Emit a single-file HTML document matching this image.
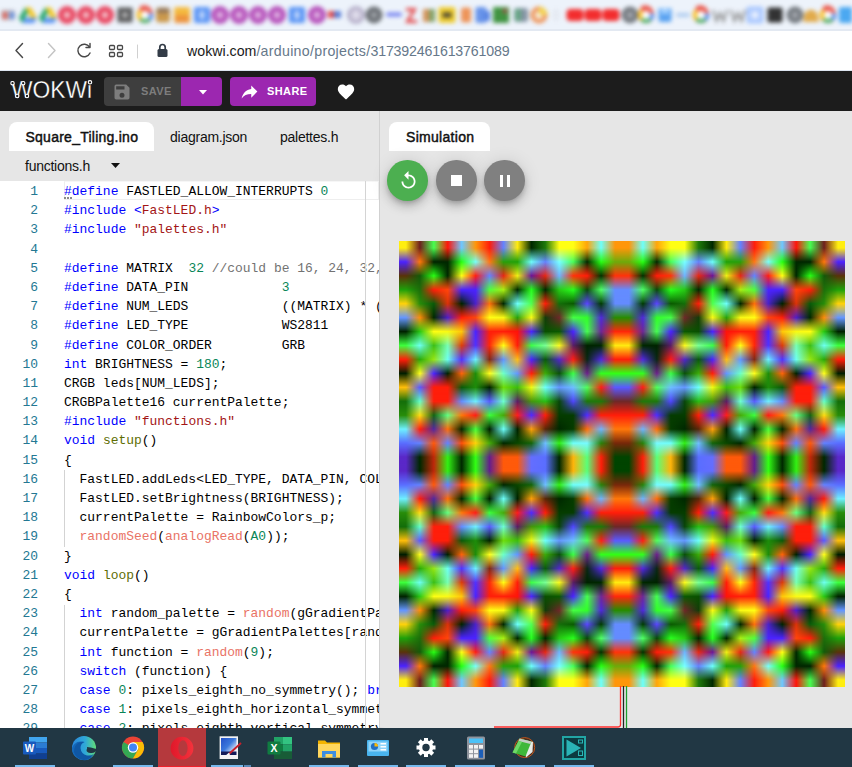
<!DOCTYPE html>
<html><head><meta charset="utf-8"><title>Wokwi</title>
<style>
*{box-sizing:border-box;margin:0;padding:0}
html,body{width:852px;height:767px;overflow:hidden;background:#e6e6e6;font-family:"Liberation Sans",sans-serif}
#root{position:relative;width:852px;height:767px;overflow:hidden}
#tabs{position:absolute;left:0;top:0;width:852px;height:31px;background:#edf3fb;border-bottom:2px solid #e3e9f2;overflow:hidden}
#tabs .ic{position:absolute;left:0;top:-1.500px;width:852px;height:31px;filter:blur(2.200px);opacity:.9}
#tabs i{position:absolute;top:8px;width:15px;height:15px;border-radius:5px;display:block}
#addr{position:absolute;left:0;top:31px;width:852px;height:40px;background:#fff;border-bottom:1px solid #dde5f0}
#url{position:absolute;left:187px;top:11.500px;font-size:14.200px;color:#66788a;letter-spacing:0px;white-space:nowrap}
#url b{font-weight:normal;color:#1a1a1a}
#bar{position:absolute;left:0;top:71px;width:852px;height:40px;background:#1c1c1c}
#save{position:absolute;left:104px;top:6px;width:78px;height:29px;background:#3e3e3e;border-radius:4px 0 0 4px}
#save span{position:absolute;left:37px;top:8px;font-size:11px;font-weight:bold;color:#7d7d7d;letter-spacing:.4px}
#dd{position:absolute;left:181px;top:6px;width:41px;height:29px;background:#9c27b0;border-radius:0 4px 4px 0}
#share{position:absolute;left:230px;top:6px;width:86px;height:29px;background:#9c27b0;border-radius:4px}
#share span{position:absolute;left:37px;top:8px;font-size:11px;font-weight:bold;color:#fff;letter-spacing:.4px}
#left{position:absolute;left:0;top:111px;width:379px;height:617px;background:#e6e6e6;overflow:hidden}
#tab1{position:absolute;left:9px;top:11px;width:145px;height:29px;background:#fff;border-radius:8px 8px 0 0}
.tabt{position:absolute;top:18px;font-size:14px;color:#111;white-space:nowrap;letter-spacing:-.25px}
#ed{position:absolute;left:0;top:70px;width:379px;height:547px;background:#fff;overflow:hidden;font-family:"Liberation Mono",monospace;font-size:12.96px;color:#000}
.ln{position:relative;height:19.190px;line-height:19.190px;white-space:pre}
.no{position:absolute;left:0;width:38px;text-align:right;color:#237893}
.tx{position:absolute;left:64px}
.k{color:#0000ff}.n{color:#098658}.s{color:#a31515}.c{color:#727272}.f{color:#5e6d03}.a{color:#e97366}
#sep{position:absolute;left:379px;top:111px;width:6px;height:617px;background:linear-gradient(to right,#c9c9c9 0,#dcdcdc 20%,#e6e6e6 100%)}
#right{position:absolute;left:380px;top:111px;width:472px;height:616px;background:#e6e6e6}
#simtab{position:absolute;left:389px;top:122px;width:101px;height:29px;background:#fff;border-radius:8px 8px 0 0}
.rb{position:absolute;top:160px;width:40.500px;height:40.500px;border-radius:50%;box-shadow:0 3px 5px -1px rgba(0,0,0,.2),0 6px 10px rgba(0,0,0,.14),0 1px 18px rgba(0,0,0,.12)}
#task{position:absolute;left:0;top:728px;width:852px;height:39px;background:#213744;overflow:hidden}
.tb{position:absolute;top:37px;width:40px;height:2px;background:#76b9ed;display:block}
</style></head><body><div id="root">
<div id="tabs"><div class="ic"><svg width="852" height="31" viewBox="0 0 852 31"><rect x="1" y="11" width="14" height="10" rx="2" fill="#b8b0b8"/><rect x="3" y="13" width="4" height="7" fill="#e04a3a"/><rect x="10" y="13" width="4" height="7" fill="#4a80e0"/><path d="M25 8.500 L31 8.500 L37 19 L31 19Z" fill="#f4c20d"/><path d="M25 8.500 L19 19 L22 24 L28 13.500Z" fill="#0f9d58"/><path d="M25 19 L37 19 L34 24 L22 24Z" fill="#4285f4"/><path d="M45 8.500 L51 8.500 L57 19 L51 19Z" fill="#f4c20d"/><path d="M45 8.500 L39 19 L42 24 L48 13.500Z" fill="#0f9d58"/><path d="M45 19 L57 19 L54 24 L42 24Z" fill="#4285f4"/><circle cx="67" cy="16" r="9" fill="#e8334f"/><circle cx="67" cy="16" r="3.2" fill="#f6c0c8"/><circle cx="86" cy="16" r="9" fill="#e8334f"/><circle cx="86" cy="16" r="3.2" fill="#f6c0c8"/><circle cx="105" cy="16" r="9" fill="#e8334f"/><circle cx="105" cy="16" r="3.2" fill="#f6c0c8"/><rect x="117.5" y="8.5" width="15" height="15" rx="1" fill="#4a4a4a"/><rect x="122.5" y="13.5" width="5" height="5" fill="#bdbdbd"/><path d="M145 16 L139.4 8 A8 8 0 0 1 152 12 Z" fill="#ea4335"/><circle cx="145" cy="16" r="8" fill="#ea4335"/><path d="M145 16 L139.3 21.700 A8 8 0 0 1 139.3 10.300 Z" fill="#fbbc05"/><path d="M145 16 L139.3 21.700 A8 8 0 0 0 150.7 21.700 Z" fill="#34a853"/><path d="M145 16 L150.7 21.700 A8 8 0 0 0 153 14.500 L145 14.500 Z" fill="#4285f4"/><circle cx="145" cy="16" r="4.300" fill="#fff"/><rect x="156" y="8.5" width="14" height="15" rx="3" fill="#c8903a"/><rect x="157" y="9" width="12" height="5" fill="#8a6a4a"/><rect x="174" y="8" width="16" height="16" rx="2" fill="#f5b42a"/><rect x="175" y="16" width="14" height="8" fill="#ee8a2a"/><rect x="194" y="8" width="16" height="16" rx="2" fill="#4a8af4"/><rect x="199.5" y="12" width="5" height="8" fill="#bcd4fb"/><circle cx="220" cy="16" r="9" fill="#b040b4"/><circle cx="220" cy="16" r="3.5" fill="#dca8de"/><circle cx="239" cy="16" r="9" fill="#b040b4"/><circle cx="239" cy="16" r="3.5" fill="#dca8de"/><circle cx="258" cy="16" r="9" fill="#b040b4"/><circle cx="258" cy="16" r="3.5" fill="#dca8de"/><circle cx="277" cy="16" r="9" fill="#b040b4"/><circle cx="277" cy="16" r="3.5" fill="#dca8de"/><circle cx="317" cy="16" r="9" fill="#b040b4"/><circle cx="317" cy="16" r="3.5" fill="#dca8de"/><rect x="289" y="8" width="16" height="16" rx="2" fill="#4a8af4"/><rect x="294.5" y="12" width="5" height="8" fill="#bcd4fb"/><rect x="328" y="12" width="6" height="7" fill="#e03a3a"/><rect x="334" y="12" width="7" height="7" fill="#4a70d0"/><circle cx="356" cy="16" r="9" fill="#b0a8c4"/><circle cx="356" cy="16" r="5" fill="#dcd8e8"/><circle cx="374" cy="16" r="8.5" fill="#5f6368"/><circle cx="374" cy="16" r="3" fill="#9a9ea4"/><rect x="386" y="13.500" width="16" height="4" rx="2" fill="#6a78f0"/><path d="M406 9 H417 L410 21 H417 V24 H405 L412 12 H406Z" fill="#e23a3a"/><rect x="423" y="10" width="6" height="13" fill="#d08a4a"/><rect x="429" y="10" width="6" height="13" fill="#7a9a58"/><rect x="438.5" y="8" width="17" height="16" rx="2" fill="#f0c818"/><rect x="442.5" y="13.5" width="9" height="5" fill="#3a3420"/><rect x="461" y="8.5" width="10" height="15" rx="2" fill="#ee8a48"/><rect x="475.5" y="8" width="11" height="16" rx="2" fill="#5a8ae8"/><rect x="484" y="12" width="6" height="10" fill="#4a7ae0"/><rect x="493" y="8" width="16" height="16" rx="1" fill="#2f8a2f"/><rect x="503" y="10" width="4" height="4" fill="#a83a3a"/><rect x="514" y="9" width="14" height="14" rx="3" fill="#7a8a9a"/><rect x="515" y="10" width="6" height="12" fill="#58a078"/><circle cx="539" cy="16" r="8.5" fill="#ee8a48"/><circle cx="539" cy="16" r="4" fill="#f8f0e0"/><path d="M539 16 L547.500 16 A8.500 8.500 0 0 0 539 7.500Z" fill="#f4d040"/><rect x="553" y="10" width="6" height="12" rx="2" fill="#e4e8f0"/><rect x="566.5" y="10" width="17" height="12" rx="4" fill="#f41818"/><rect x="584.5" y="10" width="17" height="12" rx="4" fill="#f41818"/><rect x="602.5" y="10" width="17" height="12" rx="4" fill="#f41818"/><circle cx="630" cy="16" r="8.5" fill="#6a6f75"/><circle cx="630" cy="16" r="3" fill="#a0a4aa"/><path d="M646 16 L640.4 8 A8 8 0 0 1 653 12 Z" fill="#ea4335"/><circle cx="646" cy="16" r="8" fill="#ea4335"/><path d="M646 16 L640.3 21.700 A8 8 0 0 1 640.3 10.300 Z" fill="#fbbc05"/><path d="M646 16 L640.3 21.700 A8 8 0 0 0 651.7 21.700 Z" fill="#34a853"/><path d="M646 16 L651.7 21.700 A8 8 0 0 0 654 14.500 L646 14.500 Z" fill="#4285f4"/><circle cx="646" cy="16" r="4.300" fill="#fff"/><rect x="658.5" y="9" width="13" height="14" rx="2" fill="#4a9af0"/><rect x="661" y="9" width="8" height="6" fill="#9accff"/><rect x="676" y="14" width="14" height="4" rx="2" fill="#a8c8ee"/><path d="M701 16 L695.4 8 A8 8 0 0 1 708 12 Z" fill="#ea4335"/><circle cx="701" cy="16" r="8" fill="#ea4335"/><path d="M701 16 L695.3 21.700 A8 8 0 0 1 695.3 10.300 Z" fill="#fbbc05"/><path d="M701 16 L695.3 21.700 A8 8 0 0 0 706.7 21.700 Z" fill="#34a853"/><path d="M701 16 L706.7 21.700 A8 8 0 0 0 709 14.500 L701 14.500 Z" fill="#4285f4"/><circle cx="701" cy="16" r="4.300" fill="#fff"/><path d="M713 11 L716.5 22 L720 14 L723.5 22 L727 11" stroke="#8a8a8a" stroke-width="2.200" fill="none"/><path d="M731 11 L734.5 22 L738 14 L741.5 22 L745 11" stroke="#8a8a8a" stroke-width="2.200" fill="none"/><rect x="746.5" y="7.5" width="17" height="17" rx="2" fill="#a4c4ff"/><rect x="751.5" y="12.5" width="7" height="7" fill="#e8f0ff"/><rect x="767.5" y="8.5" width="15" height="15" rx="2" fill="#1e1e1e"/><circle cx="795" cy="16" r="8.5" fill="#6a6f75"/><circle cx="795" cy="16" r="3" fill="#a0a4aa"/><path d="M803 23 L804.500 14 Q811 7 817.500 14 L819 23Z" fill="#e0a43a"/><path d="M828 16 L822.4 8 A8 8 0 0 1 835 12 Z" fill="#ea4335"/><circle cx="828" cy="16" r="8" fill="#ea4335"/><path d="M828 16 L822.3 21.700 A8 8 0 0 1 822.3 10.300 Z" fill="#fbbc05"/><path d="M828 16 L822.3 21.700 A8 8 0 0 0 833.7 21.700 Z" fill="#34a853"/><path d="M828 16 L833.7 21.700 A8 8 0 0 0 836 14.500 L828 14.500 Z" fill="#4285f4"/><circle cx="828" cy="16" r="4.300" fill="#fff"/><rect x="839" y="8" width="16" height="16" rx="2" fill="#3aa0f0"/></svg></div></div>
<div id="addr">
<svg style="position:absolute;left:0;top:0" width="180" height="39" viewBox="0 0 180 39" fill="none" stroke="#484848" stroke-width="1.450" stroke-linecap="round" stroke-linejoin="round">
<path d="M22.5 12.5 L16 19.5 L22.5 26.5"/>
<path d="M48.500 12.5 L55 19.5 L48.500 26.5" stroke="#c4c4c4"/>
<path d="M89.500 16 A6.300 6.300 0 1 0 90 22"/><path d="M90 12.500 V16.500 H86" />
<rect x="109.500" y="14.500" width="5" height="4" rx="1" stroke-width="1.300"/><rect x="117.500" y="14.500" width="5" height="4" rx="1" stroke-width="1.300"/><rect x="109.500" y="21.500" width="5" height="4" rx="1" stroke-width="1.300"/><rect x="117.500" y="21.500" width="5" height="4" rx="1" stroke-width="1.300"/>
<path d="M137.500 14 V27" stroke="#d0d0d0" stroke-width="1"/>
<rect x="157.500" y="18" width="10" height="8" rx="1.500" fill="#333c47" stroke="none"/><path d="M159.800 18 V16.200 A2.700 2.700 0 0 1 165.200 16.200 V18" stroke="#333c47" stroke-width="1.700"/>
</svg>
<div id="url"><b>wokwi.com</b><span style="letter-spacing:.29px">/arduino/projects/</span><span style="letter-spacing:-.17px">317392461613761089</span></div>
</div>
<div id="bar">
<svg style="position:absolute;left:0;top:0" width="104" height="40" viewBox="0 0 104 40"><text x="11" y="27" font-family="Liberation Sans,sans-serif" font-size="23.500" fill="#fff" stroke="#1c1c1c" stroke-width=".3" textLength="81" lengthAdjust="spacingAndGlyphs">WOKWi</text><g fill="#1c1c1c" stroke="#fff" stroke-width="1.100"><circle cx="12.500" cy="12.200" r="1.700"/><circle cx="23.200" cy="12.200" r="1.700"/><circle cx="17.200" cy="25" r="1.700"/><circle cx="27" cy="25" r="1.700"/><circle cx="90" cy="11.300" r="1.700"/></g></svg>
<div id="save"><svg style="position:absolute;left:8px;top:4.500px" width="20" height="20" viewBox="0 0 24 24"><path fill="#7d7d7d" d="M17 3H5a2 2 0 0 0-2 2v14a2 2 0 0 0 2 2h14a2 2 0 0 0 2-2V7l-4-4zm-5 16a3 3 0 1 1 0-6 3 3 0 0 1 0 6zm3-10H5V5h10v4z"/></svg><span>SAVE</span></div>
<div id="dd"><svg style="position:absolute;left:17.500px;top:12.500px" width="8" height="5" viewBox="0 0 8 5"><path d="M0 0H8L4 4.600Z" fill="#fff"/></svg></div>
<div id="share"><svg style="position:absolute;left:9px;top:4px" width="21" height="21" viewBox="0 0 24 24"><path fill="#fff" transform="translate(24 0) scale(-1 1)" d="M10 9V5l-7 7 7 7v-4.100c5 0 8.500 1.600 11 5.100-1-5-4-10-11-11z"/></svg><span>SHARE</span></div>
<svg style="position:absolute;left:336px;top:11px" width="20" height="18" viewBox="0 0 24 22"><path fill="#fff" d="M12 21.350l-1.450-1.320C5.400 15.360 2 12.280 2 8.500 2 5.420 4.420 3 7.500 3c1.740 0 3.410.81 4.500 2.090C13.090 3.810 14.760 3 16.500 3 19.580 3 22 5.420 22 8.500c0 3.780-3.400 6.860-8.550 11.540L12 21.350z"/></svg>
</div>
<div id="left">
<div id="tab1"></div>
<div class="tabt" style="left:25.500px;-webkit-text-stroke:.45px #111;letter-spacing:.25px">Square_Tiling.ino</div>
<div class="tabt" style="left:170px">diagram.json</div>
<div class="tabt" style="left:280px">palettes.h</div>
<div class="tabt" style="left:25px;top:47px">functions.h</div>
<svg style="position:absolute;left:111px;top:52px" width="10" height="6" viewBox="0 0 10 6"><path d="M0 0H9L4.500 5Z" fill="#111"/></svg>
<div id="ed">
<div style="position:absolute;left:64px;top:0;width:315px;height:19px;border:1px solid #eee;border-top-color:#f6f6f6"></div>
<div style="position:absolute;left:64px;top:16px;width:8px;height:0;border-bottom:2px dotted #8a8a8a"></div><div style="position:absolute;left:64px;top:289.300px;width:1px;height:76.800px;background:#d3d3d3"></div><div style="position:absolute;left:64px;top:423.600px;width:1px;height:130px;background:#d3d3d3"></div>
<div style="position:absolute;left:0;top:1px;width:379px;">
<div class="ln"><span class="no">1</span><span class="tx"><span class="k">#define</span> FASTLED_ALLOW_INTERRUPTS <span class="n">0</span></span></div>
<div class="ln"><span class="no">2</span><span class="tx"><span class="k">#include </span><span class="k">&lt;</span><span class="s">FastLED.h</span><span class="k">&gt;</span></span></div>
<div class="ln"><span class="no">3</span><span class="tx"><span class="k">#include </span><span class="s">"palettes.h"</span></span></div>
<div class="ln"><span class="no">4</span><span class="tx"></span></div>
<div class="ln"><span class="no">5</span><span class="tx"><span class="k">#define</span> MATRIX  <span class="n">32</span><span class="c"> //could be 16, 24, 32, 40, 48, 56, 64</span></span></div>
<div class="ln"><span class="no">6</span><span class="tx"><span class="k">#define</span> DATA_PIN            <span class="n">3</span></span></div>
<div class="ln"><span class="no">7</span><span class="tx"><span class="k">#define</span> NUM_LEDS            ((MATRIX) * (MATRIX))</span></div>
<div class="ln"><span class="no">8</span><span class="tx"><span class="k">#define</span> LED_TYPE            WS2811</span></div>
<div class="ln"><span class="no">9</span><span class="tx"><span class="k">#define</span> COLOR_ORDER         GRB</span></div>
<div class="ln"><span class="no">10</span><span class="tx"><span class="k">int</span> BRIGHTNESS = <span class="n">180</span>;</span></div>
<div class="ln"><span class="no">11</span><span class="tx">CRGB leds[NUM_LEDS];</span></div>
<div class="ln"><span class="no">12</span><span class="tx">CRGBPalette16 currentPalette;</span></div>
<div class="ln"><span class="no">13</span><span class="tx"><span class="k">#include </span><span class="s">"functions.h"</span></span></div>
<div class="ln"><span class="no">14</span><span class="tx"><span class="k">void</span> <span class="f">setup</span>()</span></div>
<div class="ln"><span class="no">15</span><span class="tx">{</span></div>
<div class="ln"><span class="no">16</span><span class="tx">  FastLED.addLeds&lt;LED_TYPE, DATA_PIN, COLOR_ORDER&gt;(leds, NUM_LEDS);</span></div>
<div class="ln"><span class="no">17</span><span class="tx">  FastLED.setBrightness(BRIGHTNESS);</span></div>
<div class="ln"><span class="no">18</span><span class="tx">  currentPalette = RainbowColors_p;</span></div>
<div class="ln"><span class="no">19</span><span class="tx">  <span class="a">randomSeed</span>(<span class="a">analogRead</span>(<span class="n">A0</span>));</span></div>
<div class="ln"><span class="no">20</span><span class="tx">}</span></div>
<div class="ln"><span class="no">21</span><span class="tx"><span class="k">void</span> <span class="f">loop</span>()</span></div>
<div class="ln"><span class="no">22</span><span class="tx">{</span></div>
<div class="ln"><span class="no">23</span><span class="tx">  <span class="k">int</span> random_palette = <span class="a">random</span>(gGradientPaletteCount);</span></div>
<div class="ln"><span class="no">24</span><span class="tx">  currentPalette = gGradientPalettes[random_palette];</span></div>
<div class="ln"><span class="no">25</span><span class="tx">  <span class="k">int</span> function = <span class="a">random</span>(<span class="n">9</span>);</span></div>
<div class="ln"><span class="no">26</span><span class="tx">  <span class="k">switch</span> (function) {</span></div>
<div class="ln"><span class="no">27</span><span class="tx">  <span class="k">case</span> <span class="n">0</span>: pixels_eighth_no_symmetry(); <span class="k">break</span>;</span></div>
<div class="ln"><span class="no">28</span><span class="tx">  <span class="k">case</span> <span class="n">1</span>: pixels_eighth_horizontal_symmetry(); <span class="k">break</span>;</span></div>
<div class="ln"><span class="no">29</span><span class="tx">  <span class="k">case</span> <span class="n">2</span>: pixels_eighth_vertical_symmetry(); <span class="k">break</span>;</span></div>
</div>
<div style="position:absolute;left:365px;top:0;width:1px;height:547px;background:#d4d4d4"></div>
</div>
</div>
<div id="sep"></div>
<div id="right"></div>
<div id="simtab"></div>
<div class="tabt" style="left:406px;top:129px;-webkit-text-stroke:.45px #111;font-size:14px;letter-spacing:.3px">Simulation</div>
<div class="rb" style="left:387px;background:#4caf50"><svg style="position:absolute;left:10.500px;top:9.500px" width="21" height="21" viewBox="0 0 24 24"><path fill="#fff" d="M12 5V1L7 6l5 5V7c3.310 0 6 2.690 6 6s-2.690 6-6 6-6-2.690-6-6H4c0 4.420 3.580 8 8 8s8-3.580 8-8-3.580-8-8-8z"/></svg></div>
<div class="rb" style="left:436px;background:#808080"><div style="position:absolute;left:14.700px;top:14.700px;width:11px;height:11px;background:#fff"></div></div>
<div class="rb" style="left:484px;background:#808080"><div style="position:absolute;left:15.500px;top:14.500px;width:3.500px;height:12px;background:#fff"></div><div style="position:absolute;left:22.500px;top:14.500px;width:3.500px;height:12px;background:#fff"></div></div>
<svg id="mx" width="446" height="446" viewBox="0 0 32 32" preserveAspectRatio="none" style="position:absolute;left:399px;top:241px;display:block">
<defs>
<linearGradient id="vf" x1="0" y1="0" x2="0" y2="1"><stop offset="0" stop-color="#fff" stop-opacity="0"/><stop offset=".5" stop-color="#fff" stop-opacity="1"/><stop offset="1" stop-color="#fff" stop-opacity="0"/></linearGradient>
<linearGradient id="vl" x1="0" y1="0" x2="0" y2="1"><stop offset="0" stop-color="#fff" stop-opacity="0"/><stop offset=".5" stop-color="#fff" stop-opacity="1"/><stop offset="1" stop-color="#fff" stop-opacity="1"/></linearGradient>
<linearGradient id="r0" gradientUnits="userSpaceOnUse" x1="0" y1="0" x2="32" y2="0"><stop offset="0.01562" stop-color="#ffee10"/><stop offset="0.04688" stop-color="#6e1e1e"/><stop offset="0.07812" stop-color="#46ff50"/><stop offset="0.10938" stop-color="#ff140a"/><stop offset="0.14062" stop-color="#6ec8ff"/><stop offset="0.17188" stop-color="#ff960a"/><stop offset="0.20312" stop-color="#ff1e0a"/><stop offset="0.23438" stop-color="#6482ff"/><stop offset="0.26562" stop-color="#ffeb10"/><stop offset="0.29688" stop-color="#002800"/><stop offset="0.32812" stop-color="#1e780a"/><stop offset="0.35938" stop-color="#ffff14"/><stop offset="0.39062" stop-color="#ffff14"/><stop offset="0.42188" stop-color="#ffa50a"/><stop offset="0.45312" stop-color="#6efffa"/><stop offset="0.48438" stop-color="#ff960a"/><stop offset="0.51562" stop-color="#ff960a"/><stop offset="0.54688" stop-color="#6efffa"/><stop offset="0.57812" stop-color="#ffa50a"/><stop offset="0.60938" stop-color="#ffff14"/><stop offset="0.64062" stop-color="#ffff14"/><stop offset="0.67188" stop-color="#1e780a"/><stop offset="0.70312" stop-color="#002800"/><stop offset="0.73438" stop-color="#ffeb10"/><stop offset="0.76562" stop-color="#6482ff"/><stop offset="0.79688" stop-color="#ff1e0a"/><stop offset="0.82812" stop-color="#ff960a"/><stop offset="0.85938" stop-color="#6ec8ff"/><stop offset="0.89062" stop-color="#ff140a"/><stop offset="0.92188" stop-color="#46ff50"/><stop offset="0.95312" stop-color="#6e1e1e"/><stop offset="0.98438" stop-color="#ffee10"/></linearGradient>
<linearGradient id="r1" gradientUnits="userSpaceOnUse" x1="0" y1="0" x2="32" y2="0"><stop offset="0.01562" stop-color="#4b23ff"/><stop offset="0.04688" stop-color="#ff780a"/><stop offset="0.07812" stop-color="#002300"/><stop offset="0.10938" stop-color="#002800"/><stop offset="0.14062" stop-color="#28ff14"/><stop offset="0.17188" stop-color="#78fffa"/><stop offset="0.20312" stop-color="#ff7814"/><stop offset="0.23438" stop-color="#28a00a"/><stop offset="0.26562" stop-color="#1ea00a"/><stop offset="0.29688" stop-color="#6efffa"/><stop offset="0.32812" stop-color="#6482ff"/><stop offset="0.35938" stop-color="#78ffff"/><stop offset="0.39062" stop-color="#46ff5a"/><stop offset="0.42188" stop-color="#002800"/><stop offset="0.45312" stop-color="#28ff14"/><stop offset="0.48438" stop-color="#6eaa0a"/><stop offset="0.51562" stop-color="#6eaa0a"/><stop offset="0.54688" stop-color="#28ff14"/><stop offset="0.57812" stop-color="#002800"/><stop offset="0.60938" stop-color="#46ff5a"/><stop offset="0.64062" stop-color="#78ffff"/><stop offset="0.67188" stop-color="#6482ff"/><stop offset="0.70312" stop-color="#6efffa"/><stop offset="0.73438" stop-color="#1ea00a"/><stop offset="0.76562" stop-color="#28a00a"/><stop offset="0.79688" stop-color="#ff7814"/><stop offset="0.82812" stop-color="#78fffa"/><stop offset="0.85938" stop-color="#28ff14"/><stop offset="0.89062" stop-color="#002800"/><stop offset="0.92188" stop-color="#002300"/><stop offset="0.95312" stop-color="#ff780a"/><stop offset="0.98438" stop-color="#4b23ff"/></linearGradient>
<linearGradient id="r2" gradientUnits="userSpaceOnUse" x1="0" y1="0" x2="32" y2="0"><stop offset="0.01562" stop-color="#5a320a"/><stop offset="0.04688" stop-color="#145a0a"/><stop offset="0.07812" stop-color="#28ff14"/><stop offset="0.10938" stop-color="#002800"/><stop offset="0.14062" stop-color="#ffff14"/><stop offset="0.17188" stop-color="#ff1e14"/><stop offset="0.20312" stop-color="#6482ff"/><stop offset="0.23438" stop-color="#e62814"/><stop offset="0.26562" stop-color="#f0f014"/><stop offset="0.29688" stop-color="#6e1496"/><stop offset="0.32812" stop-color="#e62814"/><stop offset="0.35938" stop-color="#6eb4ff"/><stop offset="0.39062" stop-color="#ff320a"/><stop offset="0.42188" stop-color="#ff1e0a"/><stop offset="0.45312" stop-color="#003200"/><stop offset="0.48438" stop-color="#ff320a"/><stop offset="0.51562" stop-color="#ff320a"/><stop offset="0.54688" stop-color="#003200"/><stop offset="0.57812" stop-color="#ff1e0a"/><stop offset="0.60938" stop-color="#ff320a"/><stop offset="0.64062" stop-color="#6eb4ff"/><stop offset="0.67188" stop-color="#e62814"/><stop offset="0.70312" stop-color="#6e1496"/><stop offset="0.73438" stop-color="#f0f014"/><stop offset="0.76562" stop-color="#e62814"/><stop offset="0.79688" stop-color="#6482ff"/><stop offset="0.82812" stop-color="#ff1e14"/><stop offset="0.85938" stop-color="#ffff14"/><stop offset="0.89062" stop-color="#002800"/><stop offset="0.92188" stop-color="#28ff14"/><stop offset="0.95312" stop-color="#145a0a"/><stop offset="0.98438" stop-color="#5a320a"/></linearGradient>
<linearGradient id="r3" gradientUnits="userSpaceOnUse" x1="0" y1="0" x2="32" y2="0"><stop offset="0.01562" stop-color="#1ea00a"/><stop offset="0.04688" stop-color="#1e6e0a"/><stop offset="0.07812" stop-color="#ff1e0a"/><stop offset="0.10938" stop-color="#ff460a"/><stop offset="0.14062" stop-color="#4b23ff"/><stop offset="0.17188" stop-color="#4b23ff"/><stop offset="0.20312" stop-color="#50ff3c"/><stop offset="0.23438" stop-color="#aaf014"/><stop offset="0.26562" stop-color="#002800"/><stop offset="0.29688" stop-color="#28ff1e"/><stop offset="0.32812" stop-color="#002800"/><stop offset="0.35938" stop-color="#28c814"/><stop offset="0.39062" stop-color="#28ff1e"/><stop offset="0.42188" stop-color="#0a460a"/><stop offset="0.45312" stop-color="#50ff64"/><stop offset="0.48438" stop-color="#648cff"/><stop offset="0.51562" stop-color="#648cff"/><stop offset="0.54688" stop-color="#50ff64"/><stop offset="0.57812" stop-color="#0a460a"/><stop offset="0.60938" stop-color="#28ff1e"/><stop offset="0.64062" stop-color="#28c814"/><stop offset="0.67188" stop-color="#002800"/><stop offset="0.70312" stop-color="#28ff1e"/><stop offset="0.73438" stop-color="#002800"/><stop offset="0.76562" stop-color="#aaf014"/><stop offset="0.79688" stop-color="#50ff3c"/><stop offset="0.82812" stop-color="#4b23ff"/><stop offset="0.85938" stop-color="#4b23ff"/><stop offset="0.89062" stop-color="#ff460a"/><stop offset="0.92188" stop-color="#ff1e0a"/><stop offset="0.95312" stop-color="#1e6e0a"/><stop offset="0.98438" stop-color="#1ea00a"/></linearGradient>
<linearGradient id="r4" gradientUnits="userSpaceOnUse" x1="0" y1="0" x2="32" y2="0"><stop offset="0.01562" stop-color="#ffd20a"/><stop offset="0.04688" stop-color="#288c0a"/><stop offset="0.07812" stop-color="#0a5a0a"/><stop offset="0.10938" stop-color="#dc320a"/><stop offset="0.14062" stop-color="#002300"/><stop offset="0.17188" stop-color="#4b23c8"/><stop offset="0.20312" stop-color="#ff6e0a"/><stop offset="0.23438" stop-color="#002800"/><stop offset="0.26562" stop-color="#6efffa"/><stop offset="0.29688" stop-color="#50ff50"/><stop offset="0.32812" stop-color="#ff1e0a"/><stop offset="0.35938" stop-color="#146e0a"/><stop offset="0.39062" stop-color="#0a5a00"/><stop offset="0.42188" stop-color="#5a46ff"/><stop offset="0.45312" stop-color="#003c00"/><stop offset="0.48438" stop-color="#648cff"/><stop offset="0.51562" stop-color="#648cff"/><stop offset="0.54688" stop-color="#003c00"/><stop offset="0.57812" stop-color="#5a46ff"/><stop offset="0.60938" stop-color="#0a5a00"/><stop offset="0.64062" stop-color="#146e0a"/><stop offset="0.67188" stop-color="#ff1e0a"/><stop offset="0.70312" stop-color="#50ff50"/><stop offset="0.73438" stop-color="#6efffa"/><stop offset="0.76562" stop-color="#002800"/><stop offset="0.79688" stop-color="#ff6e0a"/><stop offset="0.82812" stop-color="#4b23c8"/><stop offset="0.85938" stop-color="#002300"/><stop offset="0.89062" stop-color="#dc320a"/><stop offset="0.92188" stop-color="#0a5a0a"/><stop offset="0.95312" stop-color="#288c0a"/><stop offset="0.98438" stop-color="#ffd20a"/></linearGradient>
<linearGradient id="r5" gradientUnits="userSpaceOnUse" x1="0" y1="0" x2="32" y2="0"><stop offset="0.01562" stop-color="#6496ff"/><stop offset="0.04688" stop-color="#ff8c0a"/><stop offset="0.07812" stop-color="#002800"/><stop offset="0.10938" stop-color="#501ec8"/><stop offset="0.14062" stop-color="#ff1e0a"/><stop offset="0.17188" stop-color="#ff460a"/><stop offset="0.20312" stop-color="#ffff14"/><stop offset="0.23438" stop-color="#fafa14"/><stop offset="0.26562" stop-color="#28a00a"/><stop offset="0.29688" stop-color="#fafa14"/><stop offset="0.32812" stop-color="#143c0a"/><stop offset="0.35938" stop-color="#6e2828"/><stop offset="0.39062" stop-color="#46ff46"/><stop offset="0.42188" stop-color="#32ff28"/><stop offset="0.45312" stop-color="#5028dc"/><stop offset="0.48438" stop-color="#288c00"/><stop offset="0.51562" stop-color="#288c00"/><stop offset="0.54688" stop-color="#5028dc"/><stop offset="0.57812" stop-color="#32ff28"/><stop offset="0.60938" stop-color="#46ff46"/><stop offset="0.64062" stop-color="#6e2828"/><stop offset="0.67188" stop-color="#143c0a"/><stop offset="0.70312" stop-color="#fafa14"/><stop offset="0.73438" stop-color="#28a00a"/><stop offset="0.76562" stop-color="#fafa14"/><stop offset="0.79688" stop-color="#ffff14"/><stop offset="0.82812" stop-color="#ff460a"/><stop offset="0.85938" stop-color="#ff1e0a"/><stop offset="0.89062" stop-color="#501ec8"/><stop offset="0.92188" stop-color="#002800"/><stop offset="0.95312" stop-color="#ff8c0a"/><stop offset="0.98438" stop-color="#6496ff"/></linearGradient>
<linearGradient id="r6" gradientUnits="userSpaceOnUse" x1="0" y1="0" x2="32" y2="0"><stop offset="0.01562" stop-color="#002300"/><stop offset="0.04688" stop-color="#28c814"/><stop offset="0.07812" stop-color="#ffff14"/><stop offset="0.10938" stop-color="#fafa14"/><stop offset="0.14062" stop-color="#ffc80a"/><stop offset="0.17188" stop-color="#4b23ff"/><stop offset="0.20312" stop-color="#ff1e0a"/><stop offset="0.23438" stop-color="#ff1e0a"/><stop offset="0.26562" stop-color="#ff140a"/><stop offset="0.29688" stop-color="#4b23ff"/><stop offset="0.32812" stop-color="#0a5000"/><stop offset="0.35938" stop-color="#0a5a00"/><stop offset="0.39062" stop-color="#4b23ff"/><stop offset="0.42188" stop-color="#46ff50"/><stop offset="0.45312" stop-color="#6e2896"/><stop offset="0.48438" stop-color="#ff280a"/><stop offset="0.51562" stop-color="#ff280a"/><stop offset="0.54688" stop-color="#6e2896"/><stop offset="0.57812" stop-color="#46ff50"/><stop offset="0.60938" stop-color="#4b23ff"/><stop offset="0.64062" stop-color="#0a5a00"/><stop offset="0.67188" stop-color="#0a5000"/><stop offset="0.70312" stop-color="#4b23ff"/><stop offset="0.73438" stop-color="#ff140a"/><stop offset="0.76562" stop-color="#ff1e0a"/><stop offset="0.79688" stop-color="#ff1e0a"/><stop offset="0.82812" stop-color="#4b23ff"/><stop offset="0.85938" stop-color="#ffc80a"/><stop offset="0.89062" stop-color="#fafa14"/><stop offset="0.92188" stop-color="#ffff14"/><stop offset="0.95312" stop-color="#28c814"/><stop offset="0.98438" stop-color="#002300"/></linearGradient>
<linearGradient id="r7" gradientUnits="userSpaceOnUse" x1="0" y1="0" x2="32" y2="0"><stop offset="0.01562" stop-color="#3cff3c"/><stop offset="0.04688" stop-color="#6efff0"/><stop offset="0.07812" stop-color="#3cbe14"/><stop offset="0.10938" stop-color="#78ffb4"/><stop offset="0.14062" stop-color="#dc3c0a"/><stop offset="0.17188" stop-color="#5032ff"/><stop offset="0.20312" stop-color="#ff280a"/><stop offset="0.23438" stop-color="#ffff14"/><stop offset="0.26562" stop-color="#ff1e0a"/><stop offset="0.29688" stop-color="#3cff46"/><stop offset="0.32812" stop-color="#78ff96"/><stop offset="0.35938" stop-color="#fafa1e"/><stop offset="0.39062" stop-color="#5a1e64"/><stop offset="0.42188" stop-color="#002300"/><stop offset="0.45312" stop-color="#002800"/><stop offset="0.48438" stop-color="#ffeb10"/><stop offset="0.51562" stop-color="#ffeb10"/><stop offset="0.54688" stop-color="#002800"/><stop offset="0.57812" stop-color="#002300"/><stop offset="0.60938" stop-color="#5a1e64"/><stop offset="0.64062" stop-color="#fafa1e"/><stop offset="0.67188" stop-color="#78ff96"/><stop offset="0.70312" stop-color="#3cff46"/><stop offset="0.73438" stop-color="#ff1e0a"/><stop offset="0.76562" stop-color="#ffff14"/><stop offset="0.79688" stop-color="#ff280a"/><stop offset="0.82812" stop-color="#5032ff"/><stop offset="0.85938" stop-color="#dc3c0a"/><stop offset="0.89062" stop-color="#78ffb4"/><stop offset="0.92188" stop-color="#3cbe14"/><stop offset="0.95312" stop-color="#6efff0"/><stop offset="0.98438" stop-color="#3cff3c"/></linearGradient>
<linearGradient id="r8" gradientUnits="userSpaceOnUse" x1="0" y1="0" x2="32" y2="0"><stop offset="0.01562" stop-color="#ff1e0a"/><stop offset="0.04688" stop-color="#28aa0a"/><stop offset="0.07812" stop-color="#96e614"/><stop offset="0.10938" stop-color="#6efff0"/><stop offset="0.14062" stop-color="#5032ff"/><stop offset="0.17188" stop-color="#6ef0ff"/><stop offset="0.20312" stop-color="#822814"/><stop offset="0.23438" stop-color="#6496ff"/><stop offset="0.26562" stop-color="#ffbe14"/><stop offset="0.29688" stop-color="#4b23ff"/><stop offset="0.32812" stop-color="#0a5a0a"/><stop offset="0.35938" stop-color="#5028c8"/><stop offset="0.39062" stop-color="#ff1e14"/><stop offset="0.42188" stop-color="#0a2814"/><stop offset="0.45312" stop-color="#5028dc"/><stop offset="0.48438" stop-color="#ff1e0a"/><stop offset="0.51562" stop-color="#ff1e0a"/><stop offset="0.54688" stop-color="#5028dc"/><stop offset="0.57812" stop-color="#0a2814"/><stop offset="0.60938" stop-color="#ff1e14"/><stop offset="0.64062" stop-color="#5028c8"/><stop offset="0.67188" stop-color="#0a5a0a"/><stop offset="0.70312" stop-color="#4b23ff"/><stop offset="0.73438" stop-color="#ffbe14"/><stop offset="0.76562" stop-color="#6496ff"/><stop offset="0.79688" stop-color="#822814"/><stop offset="0.82812" stop-color="#6ef0ff"/><stop offset="0.85938" stop-color="#5032ff"/><stop offset="0.89062" stop-color="#6efff0"/><stop offset="0.92188" stop-color="#96e614"/><stop offset="0.95312" stop-color="#28aa0a"/><stop offset="0.98438" stop-color="#ff1e0a"/></linearGradient>
<linearGradient id="r9" gradientUnits="userSpaceOnUse" x1="0" y1="0" x2="32" y2="0"><stop offset="0.01562" stop-color="#001e00"/><stop offset="0.04688" stop-color="#ffff1e"/><stop offset="0.07812" stop-color="#4b23ff"/><stop offset="0.10938" stop-color="#002300"/><stop offset="0.14062" stop-color="#ff640a"/><stop offset="0.17188" stop-color="#1e8c0a"/><stop offset="0.20312" stop-color="#ffff1e"/><stop offset="0.23438" stop-color="#6effc8"/><stop offset="0.26562" stop-color="#6496ff"/><stop offset="0.29688" stop-color="#ff1e0a"/><stop offset="0.32812" stop-color="#3caa0a"/><stop offset="0.35938" stop-color="#0a500a"/><stop offset="0.39062" stop-color="#3cff46"/><stop offset="0.42188" stop-color="#6e1e8c"/><stop offset="0.45312" stop-color="#32ff1e"/><stop offset="0.48438" stop-color="#32ff14"/><stop offset="0.51562" stop-color="#32ff14"/><stop offset="0.54688" stop-color="#32ff1e"/><stop offset="0.57812" stop-color="#6e1e8c"/><stop offset="0.60938" stop-color="#3cff46"/><stop offset="0.64062" stop-color="#0a500a"/><stop offset="0.67188" stop-color="#3caa0a"/><stop offset="0.70312" stop-color="#ff1e0a"/><stop offset="0.73438" stop-color="#6496ff"/><stop offset="0.76562" stop-color="#6effc8"/><stop offset="0.79688" stop-color="#ffff1e"/><stop offset="0.82812" stop-color="#1e8c0a"/><stop offset="0.85938" stop-color="#ff640a"/><stop offset="0.89062" stop-color="#002300"/><stop offset="0.92188" stop-color="#4b23ff"/><stop offset="0.95312" stop-color="#ffff1e"/><stop offset="0.98438" stop-color="#001e00"/></linearGradient>
<linearGradient id="r10" gradientUnits="userSpaceOnUse" x1="0" y1="0" x2="32" y2="0"><stop offset="0.01562" stop-color="#ffbe0a"/><stop offset="0.04688" stop-color="#5a5aff"/><stop offset="0.07812" stop-color="#ff1e0a"/><stop offset="0.10938" stop-color="#ff1e0a"/><stop offset="0.14062" stop-color="#0a5a0a"/><stop offset="0.17188" stop-color="#1e8c0a"/><stop offset="0.20312" stop-color="#002300"/><stop offset="0.23438" stop-color="#6edc0a"/><stop offset="0.26562" stop-color="#3cbe0a"/><stop offset="0.29688" stop-color="#f0fa14"/><stop offset="0.32812" stop-color="#6efffa"/><stop offset="0.35938" stop-color="#6496ff"/><stop offset="0.39062" stop-color="#6ebeff"/><stop offset="0.42188" stop-color="#50ff5a"/><stop offset="0.45312" stop-color="#ff1e14"/><stop offset="0.48438" stop-color="#5a5aff"/><stop offset="0.51562" stop-color="#5a5aff"/><stop offset="0.54688" stop-color="#ff1e14"/><stop offset="0.57812" stop-color="#50ff5a"/><stop offset="0.60938" stop-color="#6ebeff"/><stop offset="0.64062" stop-color="#6496ff"/><stop offset="0.67188" stop-color="#6efffa"/><stop offset="0.70312" stop-color="#f0fa14"/><stop offset="0.73438" stop-color="#3cbe0a"/><stop offset="0.76562" stop-color="#6edc0a"/><stop offset="0.79688" stop-color="#002300"/><stop offset="0.82812" stop-color="#1e8c0a"/><stop offset="0.85938" stop-color="#0a5a0a"/><stop offset="0.89062" stop-color="#ff1e0a"/><stop offset="0.92188" stop-color="#ff1e0a"/><stop offset="0.95312" stop-color="#5a5aff"/><stop offset="0.98438" stop-color="#ffbe0a"/></linearGradient>
<linearGradient id="r11" gradientUnits="userSpaceOnUse" x1="0" y1="0" x2="32" y2="0"><stop offset="0.01562" stop-color="#146e0a"/><stop offset="0.04688" stop-color="#64ffc8"/><stop offset="0.07812" stop-color="#ff1e0a"/><stop offset="0.10938" stop-color="#ff1e0a"/><stop offset="0.14062" stop-color="#648cff"/><stop offset="0.17188" stop-color="#6ef0ff"/><stop offset="0.20312" stop-color="#5a5aff"/><stop offset="0.23438" stop-color="#6effd2"/><stop offset="0.26562" stop-color="#5a1e64"/><stop offset="0.29688" stop-color="#46960a"/><stop offset="0.32812" stop-color="#28be14"/><stop offset="0.35938" stop-color="#0a460a"/><stop offset="0.39062" stop-color="#5046ff"/><stop offset="0.42188" stop-color="#1e780a"/><stop offset="0.45312" stop-color="#1e780a"/><stop offset="0.48438" stop-color="#6e2828"/><stop offset="0.51562" stop-color="#6e2828"/><stop offset="0.54688" stop-color="#1e780a"/><stop offset="0.57812" stop-color="#1e780a"/><stop offset="0.60938" stop-color="#5046ff"/><stop offset="0.64062" stop-color="#0a460a"/><stop offset="0.67188" stop-color="#28be14"/><stop offset="0.70312" stop-color="#46960a"/><stop offset="0.73438" stop-color="#5a1e64"/><stop offset="0.76562" stop-color="#6effd2"/><stop offset="0.79688" stop-color="#5a5aff"/><stop offset="0.82812" stop-color="#6ef0ff"/><stop offset="0.85938" stop-color="#648cff"/><stop offset="0.89062" stop-color="#ff1e0a"/><stop offset="0.92188" stop-color="#ff1e0a"/><stop offset="0.95312" stop-color="#64ffc8"/><stop offset="0.98438" stop-color="#146e0a"/></linearGradient>
<linearGradient id="r12" gradientUnits="userSpaceOnUse" x1="0" y1="0" x2="32" y2="0"><stop offset="0.01562" stop-color="#288c0a"/><stop offset="0.04688" stop-color="#ffdc14"/><stop offset="0.07812" stop-color="#146414"/><stop offset="0.10938" stop-color="#64ff82"/><stop offset="0.14062" stop-color="#ff780a"/><stop offset="0.17188" stop-color="#ff1e14"/><stop offset="0.20312" stop-color="#3cff3c"/><stop offset="0.23438" stop-color="#46aa0a"/><stop offset="0.26562" stop-color="#ff1e1e"/><stop offset="0.29688" stop-color="#5028ff"/><stop offset="0.32812" stop-color="#ff1e0a"/><stop offset="0.35938" stop-color="#053c00"/><stop offset="0.39062" stop-color="#053c00"/><stop offset="0.42188" stop-color="#502dff"/><stop offset="0.45312" stop-color="#ff1e0a"/><stop offset="0.48438" stop-color="#ff1e0a"/><stop offset="0.51562" stop-color="#ff1e0a"/><stop offset="0.54688" stop-color="#ff1e0a"/><stop offset="0.57812" stop-color="#502dff"/><stop offset="0.60938" stop-color="#053c00"/><stop offset="0.64062" stop-color="#053c00"/><stop offset="0.67188" stop-color="#ff1e0a"/><stop offset="0.70312" stop-color="#5028ff"/><stop offset="0.73438" stop-color="#ff1e1e"/><stop offset="0.76562" stop-color="#46aa0a"/><stop offset="0.79688" stop-color="#3cff3c"/><stop offset="0.82812" stop-color="#ff1e14"/><stop offset="0.85938" stop-color="#ff780a"/><stop offset="0.89062" stop-color="#64ff82"/><stop offset="0.92188" stop-color="#146414"/><stop offset="0.95312" stop-color="#ffdc14"/><stop offset="0.98438" stop-color="#288c0a"/></linearGradient>
<linearGradient id="r13" gradientUnits="userSpaceOnUse" x1="0" y1="0" x2="32" y2="0"><stop offset="0.01562" stop-color="#6ef0ff"/><stop offset="0.04688" stop-color="#ff1e0a"/><stop offset="0.07812" stop-color="#5028a0"/><stop offset="0.10938" stop-color="#ff6e0a"/><stop offset="0.14062" stop-color="#002800"/><stop offset="0.17188" stop-color="#46ff3c"/><stop offset="0.20312" stop-color="#001e00"/><stop offset="0.23438" stop-color="#6efffa"/><stop offset="0.26562" stop-color="#002300"/><stop offset="0.29688" stop-color="#ffa00a"/><stop offset="0.32812" stop-color="#5a280a"/><stop offset="0.35938" stop-color="#002800"/><stop offset="0.39062" stop-color="#053c00"/><stop offset="0.42188" stop-color="#ff6e0a"/><stop offset="0.45312" stop-color="#6eb4ff"/><stop offset="0.48438" stop-color="#ff780a"/><stop offset="0.51562" stop-color="#ff780a"/><stop offset="0.54688" stop-color="#6eb4ff"/><stop offset="0.57812" stop-color="#ff6e0a"/><stop offset="0.60938" stop-color="#053c00"/><stop offset="0.64062" stop-color="#002800"/><stop offset="0.67188" stop-color="#5a280a"/><stop offset="0.70312" stop-color="#ffa00a"/><stop offset="0.73438" stop-color="#002300"/><stop offset="0.76562" stop-color="#6efffa"/><stop offset="0.79688" stop-color="#001e00"/><stop offset="0.82812" stop-color="#46ff3c"/><stop offset="0.85938" stop-color="#002800"/><stop offset="0.89062" stop-color="#ff6e0a"/><stop offset="0.92188" stop-color="#5028a0"/><stop offset="0.95312" stop-color="#ff1e0a"/><stop offset="0.98438" stop-color="#6ef0ff"/></linearGradient>
<linearGradient id="r14" gradientUnits="userSpaceOnUse" x1="0" y1="0" x2="32" y2="0"><stop offset="0.01562" stop-color="#5a6eff"/><stop offset="0.04688" stop-color="#6482ff"/><stop offset="0.07812" stop-color="#ff5a0a"/><stop offset="0.10938" stop-color="#6482ff"/><stop offset="0.14062" stop-color="#ff500a"/><stop offset="0.17188" stop-color="#ffd20a"/><stop offset="0.20312" stop-color="#46aa0a"/><stop offset="0.23438" stop-color="#002800"/><stop offset="0.26562" stop-color="#0a4600"/><stop offset="0.29688" stop-color="#14640a"/><stop offset="0.32812" stop-color="#6ebeff"/><stop offset="0.35938" stop-color="#32f014"/><stop offset="0.39062" stop-color="#6efffa"/><stop offset="0.42188" stop-color="#78faff"/><stop offset="0.45312" stop-color="#28820a"/><stop offset="0.48438" stop-color="#78280a"/><stop offset="0.51562" stop-color="#78280a"/><stop offset="0.54688" stop-color="#28820a"/><stop offset="0.57812" stop-color="#78faff"/><stop offset="0.60938" stop-color="#6efffa"/><stop offset="0.64062" stop-color="#32f014"/><stop offset="0.67188" stop-color="#6ebeff"/><stop offset="0.70312" stop-color="#14640a"/><stop offset="0.73438" stop-color="#0a4600"/><stop offset="0.76562" stop-color="#002800"/><stop offset="0.79688" stop-color="#46aa0a"/><stop offset="0.82812" stop-color="#ffd20a"/><stop offset="0.85938" stop-color="#ff500a"/><stop offset="0.89062" stop-color="#6482ff"/><stop offset="0.92188" stop-color="#ff5a0a"/><stop offset="0.95312" stop-color="#6482ff"/><stop offset="0.98438" stop-color="#5a6eff"/></linearGradient>
<linearGradient id="r15" gradientUnits="userSpaceOnUse" x1="0" y1="0" x2="32" y2="0"><stop offset="0.01562" stop-color="#5a28c8"/><stop offset="0.04688" stop-color="#002800"/><stop offset="0.07812" stop-color="#be280a"/><stop offset="0.10938" stop-color="#32f014"/><stop offset="0.14062" stop-color="#002800"/><stop offset="0.17188" stop-color="#32ff14"/><stop offset="0.20312" stop-color="#641e8c"/><stop offset="0.23438" stop-color="#ff5a0a"/><stop offset="0.26562" stop-color="#ff5a0a"/><stop offset="0.29688" stop-color="#646eff"/><stop offset="0.32812" stop-color="#5a6eff"/><stop offset="0.35938" stop-color="#002800"/><stop offset="0.39062" stop-color="#ffb40a"/><stop offset="0.42188" stop-color="#5aff78"/><stop offset="0.45312" stop-color="#ff1e0a"/><stop offset="0.48438" stop-color="#004400"/><stop offset="0.51562" stop-color="#004400"/><stop offset="0.54688" stop-color="#ff1e0a"/><stop offset="0.57812" stop-color="#5aff78"/><stop offset="0.60938" stop-color="#ffb40a"/><stop offset="0.64062" stop-color="#002800"/><stop offset="0.67188" stop-color="#5a6eff"/><stop offset="0.70312" stop-color="#646eff"/><stop offset="0.73438" stop-color="#ff5a0a"/><stop offset="0.76562" stop-color="#ff5a0a"/><stop offset="0.79688" stop-color="#641e8c"/><stop offset="0.82812" stop-color="#32ff14"/><stop offset="0.85938" stop-color="#002800"/><stop offset="0.89062" stop-color="#32f014"/><stop offset="0.92188" stop-color="#be280a"/><stop offset="0.95312" stop-color="#002800"/><stop offset="0.98438" stop-color="#5a28c8"/></linearGradient>
<linearGradient id="r16" gradientUnits="userSpaceOnUse" x1="0" y1="0" x2="32" y2="0"><stop offset="0.01562" stop-color="#5a28c8"/><stop offset="0.04688" stop-color="#002800"/><stop offset="0.07812" stop-color="#be280a"/><stop offset="0.10938" stop-color="#32f014"/><stop offset="0.14062" stop-color="#002800"/><stop offset="0.17188" stop-color="#32ff14"/><stop offset="0.20312" stop-color="#641e8c"/><stop offset="0.23438" stop-color="#ff5a0a"/><stop offset="0.26562" stop-color="#ff5a0a"/><stop offset="0.29688" stop-color="#646eff"/><stop offset="0.32812" stop-color="#5a6eff"/><stop offset="0.35938" stop-color="#002800"/><stop offset="0.39062" stop-color="#ffb40a"/><stop offset="0.42188" stop-color="#5aff78"/><stop offset="0.45312" stop-color="#ff1e0a"/><stop offset="0.48438" stop-color="#004400"/><stop offset="0.51562" stop-color="#004400"/><stop offset="0.54688" stop-color="#ff1e0a"/><stop offset="0.57812" stop-color="#5aff78"/><stop offset="0.60938" stop-color="#ffb40a"/><stop offset="0.64062" stop-color="#002800"/><stop offset="0.67188" stop-color="#5a6eff"/><stop offset="0.70312" stop-color="#646eff"/><stop offset="0.73438" stop-color="#ff5a0a"/><stop offset="0.76562" stop-color="#ff5a0a"/><stop offset="0.79688" stop-color="#641e8c"/><stop offset="0.82812" stop-color="#32ff14"/><stop offset="0.85938" stop-color="#002800"/><stop offset="0.89062" stop-color="#32f014"/><stop offset="0.92188" stop-color="#be280a"/><stop offset="0.95312" stop-color="#002800"/><stop offset="0.98438" stop-color="#5a28c8"/></linearGradient>
<linearGradient id="r17" gradientUnits="userSpaceOnUse" x1="0" y1="0" x2="32" y2="0"><stop offset="0.01562" stop-color="#5a6eff"/><stop offset="0.04688" stop-color="#6482ff"/><stop offset="0.07812" stop-color="#ff5a0a"/><stop offset="0.10938" stop-color="#6482ff"/><stop offset="0.14062" stop-color="#ff500a"/><stop offset="0.17188" stop-color="#ffd20a"/><stop offset="0.20312" stop-color="#46aa0a"/><stop offset="0.23438" stop-color="#002800"/><stop offset="0.26562" stop-color="#0a4600"/><stop offset="0.29688" stop-color="#14640a"/><stop offset="0.32812" stop-color="#6ebeff"/><stop offset="0.35938" stop-color="#32f014"/><stop offset="0.39062" stop-color="#6efffa"/><stop offset="0.42188" stop-color="#78faff"/><stop offset="0.45312" stop-color="#28820a"/><stop offset="0.48438" stop-color="#78280a"/><stop offset="0.51562" stop-color="#78280a"/><stop offset="0.54688" stop-color="#28820a"/><stop offset="0.57812" stop-color="#78faff"/><stop offset="0.60938" stop-color="#6efffa"/><stop offset="0.64062" stop-color="#32f014"/><stop offset="0.67188" stop-color="#6ebeff"/><stop offset="0.70312" stop-color="#14640a"/><stop offset="0.73438" stop-color="#0a4600"/><stop offset="0.76562" stop-color="#002800"/><stop offset="0.79688" stop-color="#46aa0a"/><stop offset="0.82812" stop-color="#ffd20a"/><stop offset="0.85938" stop-color="#ff500a"/><stop offset="0.89062" stop-color="#6482ff"/><stop offset="0.92188" stop-color="#ff5a0a"/><stop offset="0.95312" stop-color="#6482ff"/><stop offset="0.98438" stop-color="#5a6eff"/></linearGradient>
<linearGradient id="r18" gradientUnits="userSpaceOnUse" x1="0" y1="0" x2="32" y2="0"><stop offset="0.01562" stop-color="#6ef0ff"/><stop offset="0.04688" stop-color="#ff1e0a"/><stop offset="0.07812" stop-color="#5028a0"/><stop offset="0.10938" stop-color="#ff6e0a"/><stop offset="0.14062" stop-color="#002800"/><stop offset="0.17188" stop-color="#46ff3c"/><stop offset="0.20312" stop-color="#001e00"/><stop offset="0.23438" stop-color="#6efffa"/><stop offset="0.26562" stop-color="#002300"/><stop offset="0.29688" stop-color="#ffa00a"/><stop offset="0.32812" stop-color="#5a280a"/><stop offset="0.35938" stop-color="#002800"/><stop offset="0.39062" stop-color="#053c00"/><stop offset="0.42188" stop-color="#ff6e0a"/><stop offset="0.45312" stop-color="#6eb4ff"/><stop offset="0.48438" stop-color="#ff780a"/><stop offset="0.51562" stop-color="#ff780a"/><stop offset="0.54688" stop-color="#6eb4ff"/><stop offset="0.57812" stop-color="#ff6e0a"/><stop offset="0.60938" stop-color="#053c00"/><stop offset="0.64062" stop-color="#002800"/><stop offset="0.67188" stop-color="#5a280a"/><stop offset="0.70312" stop-color="#ffa00a"/><stop offset="0.73438" stop-color="#002300"/><stop offset="0.76562" stop-color="#6efffa"/><stop offset="0.79688" stop-color="#001e00"/><stop offset="0.82812" stop-color="#46ff3c"/><stop offset="0.85938" stop-color="#002800"/><stop offset="0.89062" stop-color="#ff6e0a"/><stop offset="0.92188" stop-color="#5028a0"/><stop offset="0.95312" stop-color="#ff1e0a"/><stop offset="0.98438" stop-color="#6ef0ff"/></linearGradient>
<linearGradient id="r19" gradientUnits="userSpaceOnUse" x1="0" y1="0" x2="32" y2="0"><stop offset="0.01562" stop-color="#288c0a"/><stop offset="0.04688" stop-color="#ffdc14"/><stop offset="0.07812" stop-color="#146414"/><stop offset="0.10938" stop-color="#64ff82"/><stop offset="0.14062" stop-color="#ff780a"/><stop offset="0.17188" stop-color="#ff1e14"/><stop offset="0.20312" stop-color="#3cff3c"/><stop offset="0.23438" stop-color="#46aa0a"/><stop offset="0.26562" stop-color="#ff1e1e"/><stop offset="0.29688" stop-color="#5028ff"/><stop offset="0.32812" stop-color="#ff1e0a"/><stop offset="0.35938" stop-color="#053c00"/><stop offset="0.39062" stop-color="#053c00"/><stop offset="0.42188" stop-color="#502dff"/><stop offset="0.45312" stop-color="#ff1e0a"/><stop offset="0.48438" stop-color="#ff1e0a"/><stop offset="0.51562" stop-color="#ff1e0a"/><stop offset="0.54688" stop-color="#ff1e0a"/><stop offset="0.57812" stop-color="#502dff"/><stop offset="0.60938" stop-color="#053c00"/><stop offset="0.64062" stop-color="#053c00"/><stop offset="0.67188" stop-color="#ff1e0a"/><stop offset="0.70312" stop-color="#5028ff"/><stop offset="0.73438" stop-color="#ff1e1e"/><stop offset="0.76562" stop-color="#46aa0a"/><stop offset="0.79688" stop-color="#3cff3c"/><stop offset="0.82812" stop-color="#ff1e14"/><stop offset="0.85938" stop-color="#ff780a"/><stop offset="0.89062" stop-color="#64ff82"/><stop offset="0.92188" stop-color="#146414"/><stop offset="0.95312" stop-color="#ffdc14"/><stop offset="0.98438" stop-color="#288c0a"/></linearGradient>
<linearGradient id="r20" gradientUnits="userSpaceOnUse" x1="0" y1="0" x2="32" y2="0"><stop offset="0.01562" stop-color="#146e0a"/><stop offset="0.04688" stop-color="#64ffc8"/><stop offset="0.07812" stop-color="#ff1e0a"/><stop offset="0.10938" stop-color="#ff1e0a"/><stop offset="0.14062" stop-color="#648cff"/><stop offset="0.17188" stop-color="#6ef0ff"/><stop offset="0.20312" stop-color="#5a5aff"/><stop offset="0.23438" stop-color="#6effd2"/><stop offset="0.26562" stop-color="#5a1e64"/><stop offset="0.29688" stop-color="#46960a"/><stop offset="0.32812" stop-color="#28be14"/><stop offset="0.35938" stop-color="#0a460a"/><stop offset="0.39062" stop-color="#5046ff"/><stop offset="0.42188" stop-color="#1e780a"/><stop offset="0.45312" stop-color="#1e780a"/><stop offset="0.48438" stop-color="#6e2828"/><stop offset="0.51562" stop-color="#6e2828"/><stop offset="0.54688" stop-color="#1e780a"/><stop offset="0.57812" stop-color="#1e780a"/><stop offset="0.60938" stop-color="#5046ff"/><stop offset="0.64062" stop-color="#0a460a"/><stop offset="0.67188" stop-color="#28be14"/><stop offset="0.70312" stop-color="#46960a"/><stop offset="0.73438" stop-color="#5a1e64"/><stop offset="0.76562" stop-color="#6effd2"/><stop offset="0.79688" stop-color="#5a5aff"/><stop offset="0.82812" stop-color="#6ef0ff"/><stop offset="0.85938" stop-color="#648cff"/><stop offset="0.89062" stop-color="#ff1e0a"/><stop offset="0.92188" stop-color="#ff1e0a"/><stop offset="0.95312" stop-color="#64ffc8"/><stop offset="0.98438" stop-color="#146e0a"/></linearGradient>
<linearGradient id="r21" gradientUnits="userSpaceOnUse" x1="0" y1="0" x2="32" y2="0"><stop offset="0.01562" stop-color="#ffbe0a"/><stop offset="0.04688" stop-color="#5a5aff"/><stop offset="0.07812" stop-color="#ff1e0a"/><stop offset="0.10938" stop-color="#ff1e0a"/><stop offset="0.14062" stop-color="#0a5a0a"/><stop offset="0.17188" stop-color="#1e8c0a"/><stop offset="0.20312" stop-color="#002300"/><stop offset="0.23438" stop-color="#6edc0a"/><stop offset="0.26562" stop-color="#3cbe0a"/><stop offset="0.29688" stop-color="#f0fa14"/><stop offset="0.32812" stop-color="#6efffa"/><stop offset="0.35938" stop-color="#6496ff"/><stop offset="0.39062" stop-color="#6ebeff"/><stop offset="0.42188" stop-color="#50ff5a"/><stop offset="0.45312" stop-color="#ff1e14"/><stop offset="0.48438" stop-color="#5a5aff"/><stop offset="0.51562" stop-color="#5a5aff"/><stop offset="0.54688" stop-color="#ff1e14"/><stop offset="0.57812" stop-color="#50ff5a"/><stop offset="0.60938" stop-color="#6ebeff"/><stop offset="0.64062" stop-color="#6496ff"/><stop offset="0.67188" stop-color="#6efffa"/><stop offset="0.70312" stop-color="#f0fa14"/><stop offset="0.73438" stop-color="#3cbe0a"/><stop offset="0.76562" stop-color="#6edc0a"/><stop offset="0.79688" stop-color="#002300"/><stop offset="0.82812" stop-color="#1e8c0a"/><stop offset="0.85938" stop-color="#0a5a0a"/><stop offset="0.89062" stop-color="#ff1e0a"/><stop offset="0.92188" stop-color="#ff1e0a"/><stop offset="0.95312" stop-color="#5a5aff"/><stop offset="0.98438" stop-color="#ffbe0a"/></linearGradient>
<linearGradient id="r22" gradientUnits="userSpaceOnUse" x1="0" y1="0" x2="32" y2="0"><stop offset="0.01562" stop-color="#001e00"/><stop offset="0.04688" stop-color="#ffff1e"/><stop offset="0.07812" stop-color="#4b23ff"/><stop offset="0.10938" stop-color="#002300"/><stop offset="0.14062" stop-color="#ff640a"/><stop offset="0.17188" stop-color="#1e8c0a"/><stop offset="0.20312" stop-color="#ffff1e"/><stop offset="0.23438" stop-color="#6effc8"/><stop offset="0.26562" stop-color="#6496ff"/><stop offset="0.29688" stop-color="#ff1e0a"/><stop offset="0.32812" stop-color="#3caa0a"/><stop offset="0.35938" stop-color="#0a500a"/><stop offset="0.39062" stop-color="#3cff46"/><stop offset="0.42188" stop-color="#6e1e8c"/><stop offset="0.45312" stop-color="#32ff1e"/><stop offset="0.48438" stop-color="#32ff14"/><stop offset="0.51562" stop-color="#32ff14"/><stop offset="0.54688" stop-color="#32ff1e"/><stop offset="0.57812" stop-color="#6e1e8c"/><stop offset="0.60938" stop-color="#3cff46"/><stop offset="0.64062" stop-color="#0a500a"/><stop offset="0.67188" stop-color="#3caa0a"/><stop offset="0.70312" stop-color="#ff1e0a"/><stop offset="0.73438" stop-color="#6496ff"/><stop offset="0.76562" stop-color="#6effc8"/><stop offset="0.79688" stop-color="#ffff1e"/><stop offset="0.82812" stop-color="#1e8c0a"/><stop offset="0.85938" stop-color="#ff640a"/><stop offset="0.89062" stop-color="#002300"/><stop offset="0.92188" stop-color="#4b23ff"/><stop offset="0.95312" stop-color="#ffff1e"/><stop offset="0.98438" stop-color="#001e00"/></linearGradient>
<linearGradient id="r23" gradientUnits="userSpaceOnUse" x1="0" y1="0" x2="32" y2="0"><stop offset="0.01562" stop-color="#ff1e0a"/><stop offset="0.04688" stop-color="#28aa0a"/><stop offset="0.07812" stop-color="#96e614"/><stop offset="0.10938" stop-color="#6efff0"/><stop offset="0.14062" stop-color="#5032ff"/><stop offset="0.17188" stop-color="#6ef0ff"/><stop offset="0.20312" stop-color="#822814"/><stop offset="0.23438" stop-color="#6496ff"/><stop offset="0.26562" stop-color="#ffbe14"/><stop offset="0.29688" stop-color="#4b23ff"/><stop offset="0.32812" stop-color="#0a5a0a"/><stop offset="0.35938" stop-color="#5028c8"/><stop offset="0.39062" stop-color="#ff1e14"/><stop offset="0.42188" stop-color="#0a2814"/><stop offset="0.45312" stop-color="#5028dc"/><stop offset="0.48438" stop-color="#ff1e0a"/><stop offset="0.51562" stop-color="#ff1e0a"/><stop offset="0.54688" stop-color="#5028dc"/><stop offset="0.57812" stop-color="#0a2814"/><stop offset="0.60938" stop-color="#ff1e14"/><stop offset="0.64062" stop-color="#5028c8"/><stop offset="0.67188" stop-color="#0a5a0a"/><stop offset="0.70312" stop-color="#4b23ff"/><stop offset="0.73438" stop-color="#ffbe14"/><stop offset="0.76562" stop-color="#6496ff"/><stop offset="0.79688" stop-color="#822814"/><stop offset="0.82812" stop-color="#6ef0ff"/><stop offset="0.85938" stop-color="#5032ff"/><stop offset="0.89062" stop-color="#6efff0"/><stop offset="0.92188" stop-color="#96e614"/><stop offset="0.95312" stop-color="#28aa0a"/><stop offset="0.98438" stop-color="#ff1e0a"/></linearGradient>
<linearGradient id="r24" gradientUnits="userSpaceOnUse" x1="0" y1="0" x2="32" y2="0"><stop offset="0.01562" stop-color="#3cff3c"/><stop offset="0.04688" stop-color="#6efff0"/><stop offset="0.07812" stop-color="#3cbe14"/><stop offset="0.10938" stop-color="#78ffb4"/><stop offset="0.14062" stop-color="#dc3c0a"/><stop offset="0.17188" stop-color="#5032ff"/><stop offset="0.20312" stop-color="#ff280a"/><stop offset="0.23438" stop-color="#ffff14"/><stop offset="0.26562" stop-color="#ff1e0a"/><stop offset="0.29688" stop-color="#3cff46"/><stop offset="0.32812" stop-color="#78ff96"/><stop offset="0.35938" stop-color="#fafa1e"/><stop offset="0.39062" stop-color="#5a1e64"/><stop offset="0.42188" stop-color="#002300"/><stop offset="0.45312" stop-color="#002800"/><stop offset="0.48438" stop-color="#ffeb10"/><stop offset="0.51562" stop-color="#ffeb10"/><stop offset="0.54688" stop-color="#002800"/><stop offset="0.57812" stop-color="#002300"/><stop offset="0.60938" stop-color="#5a1e64"/><stop offset="0.64062" stop-color="#fafa1e"/><stop offset="0.67188" stop-color="#78ff96"/><stop offset="0.70312" stop-color="#3cff46"/><stop offset="0.73438" stop-color="#ff1e0a"/><stop offset="0.76562" stop-color="#ffff14"/><stop offset="0.79688" stop-color="#ff280a"/><stop offset="0.82812" stop-color="#5032ff"/><stop offset="0.85938" stop-color="#dc3c0a"/><stop offset="0.89062" stop-color="#78ffb4"/><stop offset="0.92188" stop-color="#3cbe14"/><stop offset="0.95312" stop-color="#6efff0"/><stop offset="0.98438" stop-color="#3cff3c"/></linearGradient>
<linearGradient id="r25" gradientUnits="userSpaceOnUse" x1="0" y1="0" x2="32" y2="0"><stop offset="0.01562" stop-color="#002300"/><stop offset="0.04688" stop-color="#28c814"/><stop offset="0.07812" stop-color="#ffff14"/><stop offset="0.10938" stop-color="#fafa14"/><stop offset="0.14062" stop-color="#ffc80a"/><stop offset="0.17188" stop-color="#4b23ff"/><stop offset="0.20312" stop-color="#ff1e0a"/><stop offset="0.23438" stop-color="#ff1e0a"/><stop offset="0.26562" stop-color="#ff140a"/><stop offset="0.29688" stop-color="#4b23ff"/><stop offset="0.32812" stop-color="#0a5000"/><stop offset="0.35938" stop-color="#0a5a00"/><stop offset="0.39062" stop-color="#4b23ff"/><stop offset="0.42188" stop-color="#46ff50"/><stop offset="0.45312" stop-color="#6e2896"/><stop offset="0.48438" stop-color="#ff280a"/><stop offset="0.51562" stop-color="#ff280a"/><stop offset="0.54688" stop-color="#6e2896"/><stop offset="0.57812" stop-color="#46ff50"/><stop offset="0.60938" stop-color="#4b23ff"/><stop offset="0.64062" stop-color="#0a5a00"/><stop offset="0.67188" stop-color="#0a5000"/><stop offset="0.70312" stop-color="#4b23ff"/><stop offset="0.73438" stop-color="#ff140a"/><stop offset="0.76562" stop-color="#ff1e0a"/><stop offset="0.79688" stop-color="#ff1e0a"/><stop offset="0.82812" stop-color="#4b23ff"/><stop offset="0.85938" stop-color="#ffc80a"/><stop offset="0.89062" stop-color="#fafa14"/><stop offset="0.92188" stop-color="#ffff14"/><stop offset="0.95312" stop-color="#28c814"/><stop offset="0.98438" stop-color="#002300"/></linearGradient>
<linearGradient id="r26" gradientUnits="userSpaceOnUse" x1="0" y1="0" x2="32" y2="0"><stop offset="0.01562" stop-color="#6496ff"/><stop offset="0.04688" stop-color="#ff8c0a"/><stop offset="0.07812" stop-color="#002800"/><stop offset="0.10938" stop-color="#501ec8"/><stop offset="0.14062" stop-color="#ff1e0a"/><stop offset="0.17188" stop-color="#ff460a"/><stop offset="0.20312" stop-color="#ffff14"/><stop offset="0.23438" stop-color="#fafa14"/><stop offset="0.26562" stop-color="#28a00a"/><stop offset="0.29688" stop-color="#fafa14"/><stop offset="0.32812" stop-color="#143c0a"/><stop offset="0.35938" stop-color="#6e2828"/><stop offset="0.39062" stop-color="#46ff46"/><stop offset="0.42188" stop-color="#32ff28"/><stop offset="0.45312" stop-color="#5028dc"/><stop offset="0.48438" stop-color="#288c00"/><stop offset="0.51562" stop-color="#288c00"/><stop offset="0.54688" stop-color="#5028dc"/><stop offset="0.57812" stop-color="#32ff28"/><stop offset="0.60938" stop-color="#46ff46"/><stop offset="0.64062" stop-color="#6e2828"/><stop offset="0.67188" stop-color="#143c0a"/><stop offset="0.70312" stop-color="#fafa14"/><stop offset="0.73438" stop-color="#28a00a"/><stop offset="0.76562" stop-color="#fafa14"/><stop offset="0.79688" stop-color="#ffff14"/><stop offset="0.82812" stop-color="#ff460a"/><stop offset="0.85938" stop-color="#ff1e0a"/><stop offset="0.89062" stop-color="#501ec8"/><stop offset="0.92188" stop-color="#002800"/><stop offset="0.95312" stop-color="#ff8c0a"/><stop offset="0.98438" stop-color="#6496ff"/></linearGradient>
<linearGradient id="r27" gradientUnits="userSpaceOnUse" x1="0" y1="0" x2="32" y2="0"><stop offset="0.01562" stop-color="#ffd20a"/><stop offset="0.04688" stop-color="#288c0a"/><stop offset="0.07812" stop-color="#0a5a0a"/><stop offset="0.10938" stop-color="#dc320a"/><stop offset="0.14062" stop-color="#002300"/><stop offset="0.17188" stop-color="#4b23c8"/><stop offset="0.20312" stop-color="#ff6e0a"/><stop offset="0.23438" stop-color="#002800"/><stop offset="0.26562" stop-color="#6efffa"/><stop offset="0.29688" stop-color="#50ff50"/><stop offset="0.32812" stop-color="#ff1e0a"/><stop offset="0.35938" stop-color="#146e0a"/><stop offset="0.39062" stop-color="#0a5a00"/><stop offset="0.42188" stop-color="#5a46ff"/><stop offset="0.45312" stop-color="#003c00"/><stop offset="0.48438" stop-color="#648cff"/><stop offset="0.51562" stop-color="#648cff"/><stop offset="0.54688" stop-color="#003c00"/><stop offset="0.57812" stop-color="#5a46ff"/><stop offset="0.60938" stop-color="#0a5a00"/><stop offset="0.64062" stop-color="#146e0a"/><stop offset="0.67188" stop-color="#ff1e0a"/><stop offset="0.70312" stop-color="#50ff50"/><stop offset="0.73438" stop-color="#6efffa"/><stop offset="0.76562" stop-color="#002800"/><stop offset="0.79688" stop-color="#ff6e0a"/><stop offset="0.82812" stop-color="#4b23c8"/><stop offset="0.85938" stop-color="#002300"/><stop offset="0.89062" stop-color="#dc320a"/><stop offset="0.92188" stop-color="#0a5a0a"/><stop offset="0.95312" stop-color="#288c0a"/><stop offset="0.98438" stop-color="#ffd20a"/></linearGradient>
<linearGradient id="r28" gradientUnits="userSpaceOnUse" x1="0" y1="0" x2="32" y2="0"><stop offset="0.01562" stop-color="#1ea00a"/><stop offset="0.04688" stop-color="#1e6e0a"/><stop offset="0.07812" stop-color="#ff1e0a"/><stop offset="0.10938" stop-color="#ff460a"/><stop offset="0.14062" stop-color="#4b23ff"/><stop offset="0.17188" stop-color="#4b23ff"/><stop offset="0.20312" stop-color="#50ff3c"/><stop offset="0.23438" stop-color="#aaf014"/><stop offset="0.26562" stop-color="#002800"/><stop offset="0.29688" stop-color="#28ff1e"/><stop offset="0.32812" stop-color="#002800"/><stop offset="0.35938" stop-color="#28c814"/><stop offset="0.39062" stop-color="#28ff1e"/><stop offset="0.42188" stop-color="#0a460a"/><stop offset="0.45312" stop-color="#50ff64"/><stop offset="0.48438" stop-color="#648cff"/><stop offset="0.51562" stop-color="#648cff"/><stop offset="0.54688" stop-color="#50ff64"/><stop offset="0.57812" stop-color="#0a460a"/><stop offset="0.60938" stop-color="#28ff1e"/><stop offset="0.64062" stop-color="#28c814"/><stop offset="0.67188" stop-color="#002800"/><stop offset="0.70312" stop-color="#28ff1e"/><stop offset="0.73438" stop-color="#002800"/><stop offset="0.76562" stop-color="#aaf014"/><stop offset="0.79688" stop-color="#50ff3c"/><stop offset="0.82812" stop-color="#4b23ff"/><stop offset="0.85938" stop-color="#4b23ff"/><stop offset="0.89062" stop-color="#ff460a"/><stop offset="0.92188" stop-color="#ff1e0a"/><stop offset="0.95312" stop-color="#1e6e0a"/><stop offset="0.98438" stop-color="#1ea00a"/></linearGradient>
<linearGradient id="r29" gradientUnits="userSpaceOnUse" x1="0" y1="0" x2="32" y2="0"><stop offset="0.01562" stop-color="#5a320a"/><stop offset="0.04688" stop-color="#145a0a"/><stop offset="0.07812" stop-color="#28ff14"/><stop offset="0.10938" stop-color="#002800"/><stop offset="0.14062" stop-color="#ffff14"/><stop offset="0.17188" stop-color="#ff1e14"/><stop offset="0.20312" stop-color="#6482ff"/><stop offset="0.23438" stop-color="#e62814"/><stop offset="0.26562" stop-color="#f0f014"/><stop offset="0.29688" stop-color="#6e1496"/><stop offset="0.32812" stop-color="#e62814"/><stop offset="0.35938" stop-color="#6eb4ff"/><stop offset="0.39062" stop-color="#ff320a"/><stop offset="0.42188" stop-color="#ff1e0a"/><stop offset="0.45312" stop-color="#003200"/><stop offset="0.48438" stop-color="#ff320a"/><stop offset="0.51562" stop-color="#ff320a"/><stop offset="0.54688" stop-color="#003200"/><stop offset="0.57812" stop-color="#ff1e0a"/><stop offset="0.60938" stop-color="#ff320a"/><stop offset="0.64062" stop-color="#6eb4ff"/><stop offset="0.67188" stop-color="#e62814"/><stop offset="0.70312" stop-color="#6e1496"/><stop offset="0.73438" stop-color="#f0f014"/><stop offset="0.76562" stop-color="#e62814"/><stop offset="0.79688" stop-color="#6482ff"/><stop offset="0.82812" stop-color="#ff1e14"/><stop offset="0.85938" stop-color="#ffff14"/><stop offset="0.89062" stop-color="#002800"/><stop offset="0.92188" stop-color="#28ff14"/><stop offset="0.95312" stop-color="#145a0a"/><stop offset="0.98438" stop-color="#5a320a"/></linearGradient>
<linearGradient id="r30" gradientUnits="userSpaceOnUse" x1="0" y1="0" x2="32" y2="0"><stop offset="0.01562" stop-color="#4b23ff"/><stop offset="0.04688" stop-color="#ff780a"/><stop offset="0.07812" stop-color="#002300"/><stop offset="0.10938" stop-color="#002800"/><stop offset="0.14062" stop-color="#28ff14"/><stop offset="0.17188" stop-color="#78fffa"/><stop offset="0.20312" stop-color="#ff7814"/><stop offset="0.23438" stop-color="#28a00a"/><stop offset="0.26562" stop-color="#1ea00a"/><stop offset="0.29688" stop-color="#6efffa"/><stop offset="0.32812" stop-color="#6482ff"/><stop offset="0.35938" stop-color="#78ffff"/><stop offset="0.39062" stop-color="#46ff5a"/><stop offset="0.42188" stop-color="#002800"/><stop offset="0.45312" stop-color="#28ff14"/><stop offset="0.48438" stop-color="#6eaa0a"/><stop offset="0.51562" stop-color="#6eaa0a"/><stop offset="0.54688" stop-color="#28ff14"/><stop offset="0.57812" stop-color="#002800"/><stop offset="0.60938" stop-color="#46ff5a"/><stop offset="0.64062" stop-color="#78ffff"/><stop offset="0.67188" stop-color="#6482ff"/><stop offset="0.70312" stop-color="#6efffa"/><stop offset="0.73438" stop-color="#1ea00a"/><stop offset="0.76562" stop-color="#28a00a"/><stop offset="0.79688" stop-color="#ff7814"/><stop offset="0.82812" stop-color="#78fffa"/><stop offset="0.85938" stop-color="#28ff14"/><stop offset="0.89062" stop-color="#002800"/><stop offset="0.92188" stop-color="#002300"/><stop offset="0.95312" stop-color="#ff780a"/><stop offset="0.98438" stop-color="#4b23ff"/></linearGradient>
<linearGradient id="r31" gradientUnits="userSpaceOnUse" x1="0" y1="0" x2="32" y2="0"><stop offset="0.01562" stop-color="#ffee10"/><stop offset="0.04688" stop-color="#6e1e1e"/><stop offset="0.07812" stop-color="#46ff50"/><stop offset="0.10938" stop-color="#ff140a"/><stop offset="0.14062" stop-color="#6ec8ff"/><stop offset="0.17188" stop-color="#ff960a"/><stop offset="0.20312" stop-color="#ff1e0a"/><stop offset="0.23438" stop-color="#6482ff"/><stop offset="0.26562" stop-color="#ffeb10"/><stop offset="0.29688" stop-color="#002800"/><stop offset="0.32812" stop-color="#1e780a"/><stop offset="0.35938" stop-color="#ffff14"/><stop offset="0.39062" stop-color="#ffff14"/><stop offset="0.42188" stop-color="#ffa50a"/><stop offset="0.45312" stop-color="#6efffa"/><stop offset="0.48438" stop-color="#ff960a"/><stop offset="0.51562" stop-color="#ff960a"/><stop offset="0.54688" stop-color="#6efffa"/><stop offset="0.57812" stop-color="#ffa50a"/><stop offset="0.60938" stop-color="#ffff14"/><stop offset="0.64062" stop-color="#ffff14"/><stop offset="0.67188" stop-color="#1e780a"/><stop offset="0.70312" stop-color="#002800"/><stop offset="0.73438" stop-color="#ffeb10"/><stop offset="0.76562" stop-color="#6482ff"/><stop offset="0.79688" stop-color="#ff1e0a"/><stop offset="0.82812" stop-color="#ff960a"/><stop offset="0.85938" stop-color="#6ec8ff"/><stop offset="0.89062" stop-color="#ff140a"/><stop offset="0.92188" stop-color="#46ff50"/><stop offset="0.95312" stop-color="#6e1e1e"/><stop offset="0.98438" stop-color="#ffee10"/></linearGradient>
<mask id="m1" maskUnits="userSpaceOnUse" x="0" y="0.5" width="32" height="2"><rect x="0" y="0.5" width="32" height="2" fill="url(#vf)"/></mask>
<mask id="m3" maskUnits="userSpaceOnUse" x="0" y="2.5" width="32" height="2"><rect x="0" y="2.5" width="32" height="2" fill="url(#vf)"/></mask>
<mask id="m5" maskUnits="userSpaceOnUse" x="0" y="4.5" width="32" height="2"><rect x="0" y="4.5" width="32" height="2" fill="url(#vf)"/></mask>
<mask id="m7" maskUnits="userSpaceOnUse" x="0" y="6.5" width="32" height="2"><rect x="0" y="6.5" width="32" height="2" fill="url(#vf)"/></mask>
<mask id="m9" maskUnits="userSpaceOnUse" x="0" y="8.5" width="32" height="2"><rect x="0" y="8.5" width="32" height="2" fill="url(#vf)"/></mask>
<mask id="m11" maskUnits="userSpaceOnUse" x="0" y="10.5" width="32" height="2"><rect x="0" y="10.5" width="32" height="2" fill="url(#vf)"/></mask>
<mask id="m13" maskUnits="userSpaceOnUse" x="0" y="12.5" width="32" height="2"><rect x="0" y="12.5" width="32" height="2" fill="url(#vf)"/></mask>
<mask id="m15" maskUnits="userSpaceOnUse" x="0" y="14.5" width="32" height="2"><rect x="0" y="14.5" width="32" height="2" fill="url(#vf)"/></mask>
<mask id="m17" maskUnits="userSpaceOnUse" x="0" y="16.5" width="32" height="2"><rect x="0" y="16.5" width="32" height="2" fill="url(#vf)"/></mask>
<mask id="m19" maskUnits="userSpaceOnUse" x="0" y="18.5" width="32" height="2"><rect x="0" y="18.5" width="32" height="2" fill="url(#vf)"/></mask>
<mask id="m21" maskUnits="userSpaceOnUse" x="0" y="20.5" width="32" height="2"><rect x="0" y="20.5" width="32" height="2" fill="url(#vf)"/></mask>
<mask id="m23" maskUnits="userSpaceOnUse" x="0" y="22.5" width="32" height="2"><rect x="0" y="22.5" width="32" height="2" fill="url(#vf)"/></mask>
<mask id="m25" maskUnits="userSpaceOnUse" x="0" y="24.5" width="32" height="2"><rect x="0" y="24.5" width="32" height="2" fill="url(#vf)"/></mask>
<mask id="m27" maskUnits="userSpaceOnUse" x="0" y="26.5" width="32" height="2"><rect x="0" y="26.5" width="32" height="2" fill="url(#vf)"/></mask>
<mask id="m29" maskUnits="userSpaceOnUse" x="0" y="28.5" width="32" height="2"><rect x="0" y="28.5" width="32" height="2" fill="url(#vf)"/></mask>
<mask id="m31" maskUnits="userSpaceOnUse" x="0" y="30.5" width="32" height="2"><rect x="0" y="30.5" width="32" height="2" fill="url(#vl)"/></mask>
</defs>
<rect x="0" y="-0.5" width="32" height="2.02" fill="url(#r0)"/>
<rect x="0" y="1.5" width="32" height="2.02" fill="url(#r2)"/>
<rect x="0" y="3.5" width="32" height="2.02" fill="url(#r4)"/>
<rect x="0" y="5.5" width="32" height="2.02" fill="url(#r6)"/>
<rect x="0" y="7.5" width="32" height="2.02" fill="url(#r8)"/>
<rect x="0" y="9.5" width="32" height="2.02" fill="url(#r10)"/>
<rect x="0" y="11.5" width="32" height="2.02" fill="url(#r12)"/>
<rect x="0" y="13.5" width="32" height="2.02" fill="url(#r14)"/>
<rect x="0" y="15.5" width="32" height="2.02" fill="url(#r16)"/>
<rect x="0" y="17.5" width="32" height="2.02" fill="url(#r18)"/>
<rect x="0" y="19.5" width="32" height="2.02" fill="url(#r20)"/>
<rect x="0" y="21.5" width="32" height="2.02" fill="url(#r22)"/>
<rect x="0" y="23.5" width="32" height="2.02" fill="url(#r24)"/>
<rect x="0" y="25.5" width="32" height="2.02" fill="url(#r26)"/>
<rect x="0" y="27.5" width="32" height="2.02" fill="url(#r28)"/>
<rect x="0" y="29.5" width="32" height="2.02" fill="url(#r30)"/>
<rect x="0" y="0.5" width="32" height="2" fill="url(#r1)" mask="url(#m1)"/>
<rect x="0" y="2.5" width="32" height="2" fill="url(#r3)" mask="url(#m3)"/>
<rect x="0" y="4.5" width="32" height="2" fill="url(#r5)" mask="url(#m5)"/>
<rect x="0" y="6.5" width="32" height="2" fill="url(#r7)" mask="url(#m7)"/>
<rect x="0" y="8.5" width="32" height="2" fill="url(#r9)" mask="url(#m9)"/>
<rect x="0" y="10.5" width="32" height="2" fill="url(#r11)" mask="url(#m11)"/>
<rect x="0" y="12.5" width="32" height="2" fill="url(#r13)" mask="url(#m13)"/>
<rect x="0" y="14.5" width="32" height="2" fill="url(#r15)" mask="url(#m15)"/>
<rect x="0" y="16.5" width="32" height="2" fill="url(#r17)" mask="url(#m17)"/>
<rect x="0" y="18.5" width="32" height="2" fill="url(#r19)" mask="url(#m19)"/>
<rect x="0" y="20.5" width="32" height="2" fill="url(#r21)" mask="url(#m21)"/>
<rect x="0" y="22.5" width="32" height="2" fill="url(#r23)" mask="url(#m23)"/>
<rect x="0" y="24.5" width="32" height="2" fill="url(#r25)" mask="url(#m25)"/>
<rect x="0" y="26.5" width="32" height="2" fill="url(#r27)" mask="url(#m27)"/>
<rect x="0" y="28.5" width="32" height="2" fill="url(#r29)" mask="url(#m29)"/>
<rect x="0" y="30.5" width="32" height="2" fill="url(#r31)" mask="url(#m31)"/>
</svg>
<svg style="position:absolute;left:481px;top:686px" width="160" height="42" viewBox="0 0 160 42" fill="none"><path d="M139.500 0 V38.500 Q139.500 41 137 41 H13" stroke="#ff3030" stroke-width="1.300"/><path d="M142.500 0 V42" stroke="#222" stroke-width="1.300"/><path d="M145.500 0 V42" stroke="#1e9e2e" stroke-width="1.300"/></svg>
<div id="task">
<div style="position:absolute;left:158px;top:0;width:48px;height:39px;background:#b5393d"></div>
<div style="position:absolute;left:158px;top:37.500px;width:48px;height:2px;background:#f0202c"></div>
<i class="tb" style="left:15px"></i><i class="tb" style="left:113px"></i><i class="tb" style="left:211px;width:32px"></i><i class="tb" style="left:244px;width:7px;background:#5a8ab8"></i><i class="tb" style="left:309px"></i><i class="tb" style="left:358px"></i><i class="tb" style="left:406px"></i><i class="tb" style="left:455px"></i><i class="tb" style="left:505px"></i><i class="tb" style="left:554px"></i>
<svg style="position:absolute;left:0;top:0" width="852" height="40" viewBox="0 0 852 40">
<!-- word -->
<rect x="29" y="9" width="18" height="5.500" fill="#41a5ee"/><rect x="29" y="14.500" width="18" height="5.500" fill="#2b7cd3"/><rect x="29" y="20" width="18" height="5.500" fill="#185abd"/><rect x="29" y="25.500" width="18" height="5.500" fill="#103f91"/>
<rect x="23" y="13.500" width="13" height="13" rx="1" fill="#185abd"/>
<text x="29.500" y="24" font-family="Liberation Sans,sans-serif" font-size="10" font-weight="bold" fill="#fff" text-anchor="middle">W</text>
<!-- edge -->
<defs><linearGradient id="eg" x1="0" y1="0" x2="1" y2="0"><stop offset="0" stop-color="#2a86dc"/><stop offset=".55" stop-color="#2fa8d8"/><stop offset="1" stop-color="#62dc78"/></linearGradient></defs>
<circle cx="84" cy="20" r="12" fill="url(#eg)"/>
<path d="M72 20 A12 12 0 0 0 93 28 Q88 30.500 83 28 Q77 25 78.500 18.500 Q80 14.500 84.500 14 Q78 12.500 74.500 16 Q72.500 18 72 20Z" fill="#1467b8"/>
<path d="M84.500 14 Q80.500 15.500 80.500 20 Q81 26 87 27.500 Q91 28 94 26 Q90 31.500 84 32 Q76 31 74 24 Q74 17 79 14.500 Q82 13.500 84.500 14Z" fill="#0f57a4"/>
<path d="M96.500 21 Q96 25.500 90.500 25 Q86.500 24.500 86.500 22 Q87.500 20.500 87 19 Q90 19 96.500 21Z" fill="#213744"/>
<!-- chrome -->
<circle cx="133" cy="19.500" r="11" fill="#ea4335"/>
<path d="M133 19.500 L123.470 14 A11 11 0 0 0 133 30.500 L138.500 21Z" fill="#34a853"/>
<path d="M133 19.500 L138.500 21 L133 30.500 A11 11 0 0 0 142.530 14 L133 14Z" fill="#fbbc05"/>
<circle cx="133" cy="19.500" r="5.200" fill="#fff"/><circle cx="133" cy="19.500" r="4" fill="#4285f4"/>
<!-- opera -->
<defs><linearGradient id="og" x1="0" y1="0" x2="1" y2="0"><stop offset="0" stop-color="#e0182a"/><stop offset="1" stop-color="#f4323c"/></linearGradient></defs>
<path fill-rule="evenodd" fill="url(#og)" d="M170.600 20.200 A11.400 11.400 0 1 0 193.400 20.200 A11.400 11.400 0 1 0 170.600 20.200Z M178.300 20.200 A4.650 7.900 0 1 0 187.600 20.200 A4.650 7.900 0 1 0 178.300 20.200Z"/>
<!-- paint -->
<defs><linearGradient id="pg" x1="0" y1="0" x2="1" y2="1"><stop offset="0" stop-color="#2450c8"/><stop offset=".45" stop-color="#3a78dc"/><stop offset=".8" stop-color="#dce8f8"/><stop offset="1" stop-color="#ffffff"/></linearGradient></defs>
<rect x="219.600" y="8.300" width="18.400" height="22.700" fill="#f2f2f4"/><rect x="221" y="10" width="15.500" height="17" fill="url(#pg)"/><rect x="221" y="23.500" width="15.500" height="3.500" fill="#121a58"/><path d="M241 15 L229 26" stroke="#c8202c" stroke-width="1.900" fill="none"/><path d="M229.500 25.500 L226.500 28" stroke="#f4f4f4" stroke-width="2" fill="none"/>
<!-- excel -->
<rect x="274" y="9" width="9" height="7.300" fill="#21a366"/><rect x="283" y="9" width="9" height="7.300" fill="#33c481"/><rect x="274" y="16.300" width="9" height="7.300" fill="#107c41"/><rect x="283" y="16.300" width="9" height="7.300" fill="#21a366"/><rect x="274" y="23.600" width="18" height="7.400" fill="#185c37"/>
<rect x="267.500" y="13.500" width="13" height="13" rx="1" fill="#107c41"/>
<text x="274" y="24" font-family="Liberation Sans,sans-serif" font-size="10.500" font-weight="bold" fill="#fff" text-anchor="middle">X</text>
<!-- explorer -->
<path d="M318 12.500 H325 L327 14.500 H340 V29.500 H318Z" fill="#f4b400"/><rect x="318" y="16" width="22" height="13.500" fill="#ffd75e"/><path d="M322 29.500 V23 H336 V29.500 H332.500 V26 H325.500 V29.500Z" fill="#3d8ee0"/>
<!-- control panel -->
<rect x="367" y="12" width="22" height="16" rx="1" fill="#49b4ee"/><rect x="368.500" y="13.500" width="19" height="10" fill="#8fd4fa"/><circle cx="374.500" cy="18.500" r="3.600" fill="#1f6fc4"/><path d="M374.500 18.500 V14.900 A3.600 3.600 0 0 1 378.100 18.500Z" fill="#ffb900"/><rect x="380.500" y="15" width="5.500" height="1.500" fill="#fff"/><rect x="380.500" y="18" width="5.500" height="1.500" fill="#fff"/><rect x="380.500" y="21" width="5.500" height="1.500" fill="#fff"/>
<!-- settings gear -->
<g transform="translate(426 19.500)"><g fill="#fff"><rect x="-2" y="-9.500" width="4" height="19"/><rect x="-2" y="-9.500" width="4" height="19" transform="rotate(45)"/><rect x="-2" y="-9.500" width="4" height="19" transform="rotate(90)"/><rect x="-2" y="-9.500" width="4" height="19" transform="rotate(135)"/><circle r="7.200"/></g><circle r="3.700" fill="#213744"/></g>
<!-- calculator -->
<rect x="467" y="8.500" width="18" height="23" rx="1.500" fill="#8e939c"/><rect x="469" y="10.500" width="14" height="4.500" fill="#4cc2f8"/>
<g fill="#f2f2f2"><rect x="469" y="17" width="4" height="3.600"/><rect x="474" y="17" width="4" height="3.600"/><rect x="479" y="17" width="4" height="3.600"/><rect x="469" y="21.600" width="4" height="3.600"/><rect x="474" y="21.600" width="4" height="3.600"/><rect x="469" y="26.200" width="4" height="3.600"/><rect x="474" y="26.200" width="4" height="3.600"/></g><rect x="479" y="21.600" width="4" height="8.200" fill="#1c5fb8"/>
<!-- notepad -->
<circle cx="524.700" cy="19.600" r="10" fill="#4a2c1c" stroke="#c0561c" stroke-width="1"/>
<path d="M522.500 11.500 L533 14 L532.500 24 L526 29.500Z" fill="#e8ece8"/>
<path d="M519.500 10.500 L531.500 13.500 L525.500 28.500 L512.500 24.500Z" fill="#3fb83a"/>
<path d="M519.500 10.500 L531.500 13.500 L530.500 16 L518.500 13Z" fill="#c4ccc4"/>
<path d="M518.500 13 L522 14 L516 25.500 L512.500 24.500Z" fill="#6fd868"/>
<!-- video -->
<rect x="562" y="8" width="24" height="24" fill="#22a5a4"/><rect x="564" y="10" width="20" height="20" fill="#0c3a40"/><path d="M566.500 11.500 L581 20 L566.500 28.500Z" fill="#2ab4b6"/><rect x="578.500" y="12" width="4" height="3" fill="none" stroke="#2ab4b6" stroke-width="1"/><rect x="578.500" y="23" width="4" height="4.500" fill="none" stroke="#2ab4b6" stroke-width="1"/>
</svg>
</div>
</div></body></html>
